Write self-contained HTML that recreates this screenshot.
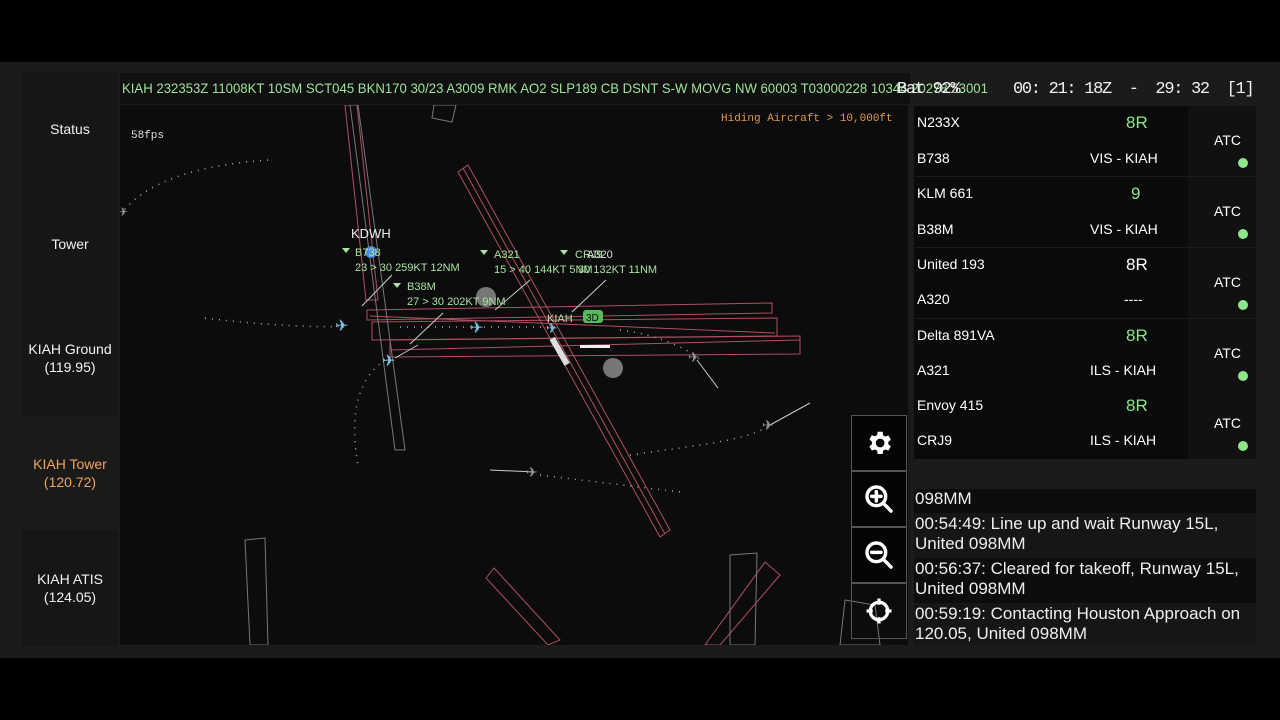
<!DOCTYPE html>
<html><head><meta charset="utf-8"><style>
*{margin:0;padding:0;box-sizing:border-box}
body{width:1280px;height:720px;background:#000;position:relative;overflow:hidden;font-family:"Liberation Sans",sans-serif;color:#fff}
.frame{position:absolute;left:0;top:62px;width:1280px;height:596px;background:#1b1b1b}
.side{position:absolute;left:22px;top:72px;width:96px;height:574px;background:#161616}
.si{position:absolute;left:0;width:96px;height:114px;display:flex;align-items:center;justify-content:center;text-align:center;font-size:14px;line-height:18px;color:#f2f2f2}
.metar{position:absolute;left:120px;top:73px;width:790px;height:31px;background:#0f100f}
.metar div{position:absolute;left:2px;top:0;color:#9fe39a;font-size:14px;line-height:31px;white-space:nowrap;transform:scaleX(0.94);transform-origin:0 0}
.map{position:absolute;left:120px;top:105px;width:788px;height:540px;background:#0c0c0c;overflow:hidden}
.clock{position:absolute;top:80px;font-family:"Liberation Mono",monospace;font-size:17px;color:#f2f2f2;white-space:pre;letter-spacing:-1.3px}
.strip{position:absolute;left:914px;width:342px;height:70px;background:#0a0a0a;font-size:14px}
.strip .atc{position:absolute;right:0;top:0;width:68px;height:70px;background:#111}
.strip span{position:absolute}
.dot{position:absolute;width:10px;height:10px;border-radius:50%;background:#8ee68a;right:8px;top:52px}
.log{position:absolute;left:914px;top:489px;width:342px;height:156px;background:#0d0d0d;font-size:17px;line-height:20.5px;color:#eee;overflow:hidden}
.log div{padding:1px 0 3px 1px}
.btn{position:absolute;left:851px;width:56px;height:56px;background:#050505;border:1px solid #555;display:flex;align-items:center;justify-content:center}
</style></head><body>
<div class="frame"></div>
<div class="side">
<div class="si" style="top:0">Status</div>
<div class="si" style="top:115px">Tower</div>
<div class="si" style="top:229px">KIAH Ground<br>(119.95)</div>
<div class="si" style="top:344px;background:#1a1a1a;color:#f0a35a">KIAH Tower<br>(120.72)</div>
<div class="si" style="top:459px">KIAH ATIS<br>(124.05)</div>
</div>
<div class="metar"><div>KIAH 232353Z 11008KT 10SM SCT045 BKN170 30/23 A3009 RMK AO2 SLP189 CB DSNT S-W MOVG NW 60003 T03000228 10344 20278 53001</div></div>
<div class="clock" style="left:897px">Bat 92%</div>
<div class="clock" style="left:1013px">00: 21: 18Z  -  29: 32  [1]</div>
<div class="map">
<svg width="788" height="540" viewBox="120 105 788 540" xmlns="http://www.w3.org/2000/svg" font-family="Liberation Sans" font-size="11">
<g fill="none" stroke="#b05060" stroke-width="1">
<polygon points="367,310 772,303 772,313 367,320"/>
<polygon points="372,322 777,318 777,336 372,340"/>
<polygon points="390,340 800,336 800,354 390,357"/>
<line x1="370" y1="316" x2="775" y2="333"/>
<line x1="390" y1="350" x2="800" y2="340"/>
<polygon points="458,172 468,165 670,530 660,537"/>
<line x1="463" y1="168" x2="665" y2="534"/>
<polygon points="345,105 357,105 378,300 366,300"/>
<polygon points="486,578 494,568 560,640 548,645"/>
<polygon points="765,562 780,575 720,645 705,645"/>
</g>
<g fill="none" stroke="#777" stroke-width="1">
<polygon points="350,105 358,105 405,450 395,450"/>
<polygon points="434,105 456,105 452,122 432,118"/>
<polygon points="245,540 265,538 268,645 250,645"/>
<polygon points="730,555 757,553 755,645 730,645"/>
<polygon points="845,600 875,605 880,645 840,645"/>
</g>
<g fill="none" stroke="#aaa" stroke-width="1.5" stroke-dasharray="1 6">
<path d="M268,160 C200,165 150,180 124,210"/>
<path d="M205,318 C260,325 320,328 345,326"/>
<path d="M400,327 L560,327"/>
<path d="M385,360 C355,380 350,420 358,465"/>
<path d="M630,455 C700,445 750,440 770,425"/>
<path d="M540,475 L680,492"/>
<path d="M620,330 C660,335 690,350 700,360"/>
</g>
<g stroke="#ccc" stroke-width="1">
<line x1="362" y1="306" x2="392" y2="275"/><line x1="410" y1="344" x2="443" y2="313"/>
<line x1="495" y1="310" x2="530" y2="280"/><line x1="572" y1="312" x2="606" y2="280"/>
<line x1="697" y1="360" x2="718" y2="388"/><line x1="770" y1="425" x2="810" y2="403"/>
<line x1="490" y1="470" x2="535" y2="472"/><line x1="395" y1="358" x2="418" y2="345"/>
</g>
<g fill="#7fc4ea"><text x="335" y="331" font-size="16">✈</text><text x="470" y="333" font-size="16">✈</text><text x="382" y="366" font-size="16">✈</text><text x="546" y="333" font-size="14">✈</text></g>
<g fill="#999"><text x="118" y="216" font-size="12">✈</text><text x="688" y="362" font-size="14">✈</text><text x="762" y="430" font-size="14">✈</text><text x="526" y="477" font-size="14">✈</text></g>
<rect x="556" y="336" width="6" height="30" fill="#ddd" transform="rotate(-30 560 350)"/>
<rect x="580" y="345" width="30" height="3" fill="#eee"/>
<circle cx="486" cy="297" r="10" fill="#777"/><circle cx="613" cy="368" r="10" fill="#777"/>
<circle cx="371" cy="252" r="6" fill="#4a8fe0"/>
<rect x="583" y="310" width="20" height="13" rx="3" fill="#5ab85a"/>
<text x="586" y="321" fill="#0a0a0a" font-size="10">3D</text>
<g fill="#a8e3a0">
<text x="355" y="256">B738</text><text x="355" y="271">23 &gt; 30 259KT 12NM</text>
<text x="407" y="290">B38M</text><text x="407" y="305">27 &gt; 30 202KT 9NM</text>
<text x="494" y="258">A321</text><text x="494" y="273">15 &gt; 40 144KT 5NM</text>
<text x="575" y="258">CRJ9</text><text x="578" y="273">30 132KT 11NM</text>
<text x="547" y="322">KIAH</text>
<path d="M342,248h8l-4,5z M480,250h8l-4,5z M560,250h8l-4,5z M393,283h8l-4,5z"/>
</g>
<text x="351" y="238" fill="#eee" font-size="13">KDWH</text>
<text x="587" y="258" fill="#ddd">A320</text>
<text x="131" y="138" fill="#ddd" font-family="Liberation Mono" font-size="11">58fps</text>
<text x="721" y="121" fill="#e0994f" font-family="Liberation Mono" font-size="11">Hiding Aircraft &gt; 10,000ft</text>
</svg>
</div>
<div class="strip" style="top:106px"><span style="left:3px;top:8px">N233X</span><span style="left:3px;top:44px">B738</span><span style="left:212px;top:7px;color:#8ee68a;font-size:17px">8R</span><span style="left:176px;top:44px">VIS - KIAH</span><div class="atc"><span style="left:26px;top:26px">ATC</span><div class="dot"></div></div></div>
<div class="strip" style="top:177px"><span style="left:3px;top:8px">KLM 661</span><span style="left:3px;top:44px">B38M</span><span style="left:217px;top:7px;color:#8ee68a;font-size:17px">9</span><span style="left:176px;top:44px">VIS - KIAH</span><div class="atc"><span style="left:26px;top:26px">ATC</span><div class="dot"></div></div></div>
<div class="strip" style="top:248px"><span style="left:3px;top:8px">United 193</span><span style="left:3px;top:43px">A320</span><span style="left:212px;top:7px;font-size:17px">8R</span><span style="left:210px;top:43px">----</span><div class="atc"><span style="left:26px;top:26px">ATC</span><div class="dot"></div></div></div>
<div class="strip" style="top:319px"><span style="left:3px;top:8px">Delta 891VA</span><span style="left:3px;top:43px">A321</span><span style="left:212px;top:7px;color:#8ee68a;font-size:17px">8R</span><span style="left:176px;top:43px">ILS - KIAH</span><div class="atc"><span style="left:26px;top:26px">ATC</span><div class="dot"></div></div></div>
<div class="strip" style="top:389px"><span style="left:3px;top:8px">Envoy 415</span><span style="left:3px;top:43px">CRJ9</span><span style="left:212px;top:7px;color:#8ee68a;font-size:17px">8R</span><span style="left:176px;top:43px">ILS - KIAH</span><div class="atc"><span style="left:26px;top:26px">ATC</span><div class="dot"></div></div></div>
<div class="log">
<div style="padding-top:0">098MM</div>
<div style="background:#161616">00:54:49: Line up and wait Runway 15L,<br>United 098MM</div>
<div>00:56:37: Cleared for takeoff, Runway 15L,<br>United 098MM</div>
<div style="background:#161616">00:59:19: Contacting Houston Approach on<br>120.05, United 098MM</div>
</div>
<div class="btn" style="top:415px"><svg width="30" height="30" viewBox="0 0 24 24"><path fill="#fff" d="M19.4 13a7.5 7.5 0 000-2l2.1-1.6-2-3.5-2.5 1a7 7 0 00-1.7-1L14.9 3h-4l-.4 2.7a7 7 0 00-1.7 1l-2.5-1-2 3.5L6.4 11a7.5 7.5 0 000 2l-2.1 1.6 2 3.5 2.5-1a7 7 0 001.7 1l.4 2.7h4l.4-2.7a7 7 0 001.7-1l2.5 1 2-3.5zM12.9 15.5a3.5 3.5 0 110-7 3.5 3.5 0 010 7z"/></svg></div>
<div class="btn" style="top:471px"><svg width="32" height="32" viewBox="0 0 24 24" fill="none" stroke="#fff" stroke-width="2.6" stroke-linecap="round"><circle cx="10" cy="10" r="7"/><path d="M15 15l6 6M10 6.5v7M6.5 10h7"/></svg></div>
<div class="btn" style="top:527px"><svg width="32" height="32" viewBox="0 0 24 24" fill="none" stroke="#fff" stroke-width="2.6" stroke-linecap="round"><circle cx="10" cy="10" r="7"/><path d="M15 15l6 6M6.5 10h7"/></svg></div>
<div class="btn" style="top:583px;background:transparent"><svg width="30" height="30" viewBox="0 0 24 24" fill="none" stroke="#fff" stroke-width="2.6"><circle cx="12" cy="12" r="7"/><path d="M12 2v5M12 17v5M2 12h5M17 12h5"/></svg></div>
</body></html>
